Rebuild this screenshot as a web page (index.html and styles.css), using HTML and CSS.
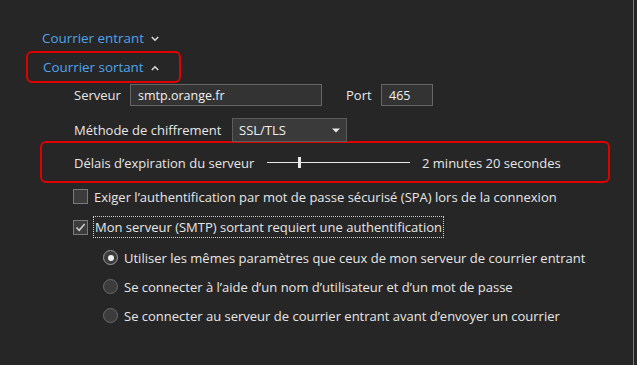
FILE: index.html
```html
<!DOCTYPE html>
<html lang="fr">
<head>
<meta charset="utf-8">
<link rel="stylesheet" href="styles.css">
</head>
<body>
<div class="page">
  <div class="section-head">
    <span class="link">Courrier entrant</span>
    <svg class="chev" width="8" height="6" viewBox="0 0 8 6"><path d="M0.8 1 L4 4.2 L7.2 1" fill="none" stroke="#d8d8d8" stroke-width="1.6"/></svg>
  </div>
  <div class="hl hl-head">
    <span class="link">Courrier sortant</span>
    <svg class="chev" width="8" height="6" viewBox="0 0 8 6"><path d="M0.8 5 L4 1.8 L7.2 5" fill="none" stroke="#d8d8d8" stroke-width="1.6"/></svg>
  </div>
  <div class="row row-server">
    <span class="label lbl-server">Serveur</span>
    <div class="input in-server">smtp.orange.fr</div>
    <span class="label lbl-port">Port</span>
    <div class="input in-port">465</div>
  </div>
  <div class="row row-method">
    <span class="label lbl-method">Méthode de chiffrement</span>
    <div class="select">
      <span>SSL/TLS</span>
      <svg width="8" height="5" viewBox="0 0 8 5"><path d="M0 0.5 H8 L4 4.5 Z" fill="#e8e8e8"/></svg>
    </div>
  </div>
  <div class="hl hl-timeout">
    <span class="label lbl-timeout">Délais d’expiration du serveur</span>
    <div class="slider"><div class="thumb"></div></div>
    <span class="label">2 minutes 20 secondes</span>
  </div>
  <div class="check-row row-spa">
    <span class="checkbox"></span>
    <span class="label">Exiger l’authentification par mot de passe sécurisé (SPA) lors de la connexion</span>
  </div>
  <div class="check-row row-auth">
    <span class="checkbox">
      <svg width="13" height="13" viewBox="0 0 13 13"><path d="M2.5 6.5 L5.2 9.3 L10.6 3" fill="none" stroke="#d0d0d0" stroke-width="1.5"/></svg>
    </span>
    <span class="label focus">Mon serveur (SMTP) sortant requiert une authentification</span>
  </div>
  <div class="radios">
    <div class="radio-row"><span class="radio on"><span class="dot"></span></span><span class="label">Utiliser les mêmes paramètres que ceux de mon serveur de courrier entrant</span></div>
    <div class="radio-row"><span class="radio"></span><span class="label">Se connecter à l’aide d’un nom d’utilisateur et d’un mot de passe</span></div>
    <div class="radio-row"><span class="radio"></span><span class="label">Se connecter au serveur de courrier entrant avant d’envoyer un courrier</span></div>
  </div>
</div>
</body>
</html>
```
FILE: styles.css
```css
html, body {
  margin: 0;
  padding: 0;
  background: #262626;
}
body {
  font-family: "Open Sans", "Noto Sans", sans-serif;
  font-size: 13px;
  color: #e6e6e6;
}
.page {
  width: 634px;
  height: 365px;
  border-right: 1px solid #7c7c7c;
  padding-top: 28px;
  box-sizing: border-box;
  overflow: hidden;
}
.section-head {
  display: flex;
  align-items: center;
  height: 20px;
  margin-left: 42px;
}
.link {
  color: #4ea4ea;
  font-size: 13.4px;
}
.chev {
  margin-left: 7px;
  margin-top: 1px;
}
.hl {
  border: 2px solid #e00000;
  border-radius: 6px;
  box-sizing: border-box;
  display: flex;
  align-items: center;
}
.hl-head {
  margin: 3px 0 0 26px;
  width: 155px;
  height: 32px;
  padding-left: 15px;
}
.row {
  display: flex;
  align-items: center;
  margin-left: 74px;
}
.row-server {
  margin-top: 1px;
  height: 22px;
}
.lbl-server { width: 56px; }
.input {
  height: 22px;
  box-sizing: border-box;
  border: 1px solid #666;
  background: #333;
  padding-left: 7px;
  display: flex;
  align-items: center;
  color: #f0f0f0;
  font-size: 12.5px;
}
.in-server { width: 192px; }
.lbl-port { margin-left: 24px; width: 35px; }
.in-port { width: 52px; }
.row-method {
  margin-top: 12px;
  height: 24px;
}
.lbl-method { width: 158px; }
.select {
  width: 115px;
  height: 24px;
  box-sizing: border-box;
  border: 1px solid #5c5c5c;
  background: #3a3a3a;
  display: flex;
  align-items: center;
  justify-content: space-between;
  padding: 0 6px 0 6px;
  color: #f0f0f0;
}
.hl-timeout {
  margin: -1px 0 0 40px;
  width: 570px;
  height: 42px;
  padding-left: 32px;
  padding-top: 1px;
}
.lbl-timeout { width: 193px; }
.slider {
  width: 143px;
  height: 1px;
  background: #e8e8e8;
  position: relative;
  margin-right: 12px;
}
.thumb {
  position: absolute;
  left: 31px;
  top: -5px;
  width: 3px;
  height: 11px;
  background: #e8e8e8;
}
.check-row {
  display: flex;
  align-items: center;
  margin-left: 73px;
}
.row-spa {
  margin-top: 3px;
  height: 21px;
}
.row-auth {
  margin-top: 9px;
  height: 22px;
}
.checkbox {
  width: 15px;
  height: 15px;
  box-sizing: border-box;
  border: 1px solid #7a7a7a;
  background: #3c3c3c;
  margin-right: 6px;
  display: flex;
  align-items: center;
  justify-content: center;
}
.focus {
  border: 1px dotted #cfcfcf;
  height: 22px;
  box-sizing: border-box;
  display: flex;
  align-items: center;
  padding: 0 1px 0 1px;
  margin-left: -1px;
}
.radios {
  margin-top: 5px;
  margin-left: 103px;
}
.radio-row {
  display: flex;
  align-items: center;
  height: 29px;
}
.radio {
  width: 15px;
  height: 15px;
  box-sizing: border-box;
  border-radius: 50%;
  border: 1px solid #6a6a6a;
  background: #3c3c3c;
  margin-right: 6px;
  display: flex;
  align-items: center;
  justify-content: center;
}
.radio.on {
  border: 1px solid #9a9a9a;
}
.dot {
  width: 6px;
  height: 6px;
  border-radius: 50%;
  background: #f0f0f0;
}
```
